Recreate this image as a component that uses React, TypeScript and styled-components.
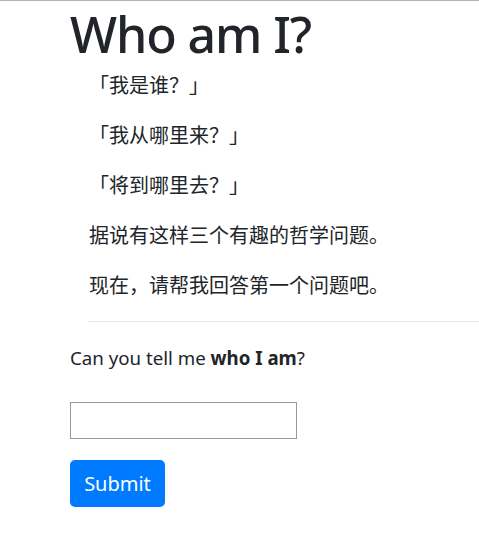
import React from "react";
import styled, { createGlobalStyle } from "styled-components";

const GlobalStyle = createGlobalStyle`
  html, body {
    margin: 0;
    padding: 0;
    background: #fff;
  }
  body {
    border-top: 1px solid #b3b3b3;
    color: #212529;
    font-family: "Noto Sans", "Noto Sans CJK SC", sans-serif;
  }
`;

const Page = styled.main`
  padding: 0 0 0 70px;
`;

const Title = styled.h1`
  margin: 0;
  font-size: 50px;
  font-weight: 500;
  line-height: 66px;
  letter-spacing: -1.1px;
`;

const Quote = styled.blockquote`
  margin: 1px 0 0 19px;
`;

const Line = styled.p`
  margin: 0;
  height: 50px;
  font-family: "Noto Sans CJK SC", sans-serif;
  font-size: 20px;
  line-height: 34px;
`;

const Rule = styled.hr`
  margin: 3px 0 0 -1px;
  border: 0;
  border-top: 1px solid #e6e6e6;
  height: 0;
`;

const Question = styled.p`
  margin: 22px 0 0;
  font-size: 18.7px;
  line-height: 28px;

  strong {
    font-weight: 700;
  }
`;

const Form = styled.form`
  display: flex;
  flex-direction: column;
  align-items: flex-start;
  gap: 21px;
  margin-top: 30px;
`;

const Field = styled.input`
  box-sizing: border-box;
  width: 227px;
  height: 37px;
  margin: 0;
  border: 1px solid #999;
  border-radius: 0;
  padding: 0 6px;
  font-size: 16px;
  outline: none;
`;

const Button = styled.button`
  box-sizing: border-box;
  width: 95px;
  height: 47px;
  border: 0;
  border-radius: 5px;
  background: #007bff;
  color: #fff;
  font-family: "Noto Sans", sans-serif;
  font-size: 20px;
  cursor: pointer;
`;

export default function App() {
  const lines = ["「我是谁？」", "「我从哪里来？」", "「将到哪里去？」", "据说有这样三个有趣的哲学问题。", "现在，请帮我回答第一个问题吧。"];

  return (
    <>
      <GlobalStyle />
      <Page>
        <Title>Who am I?</Title>
        <Quote>
          {lines.map((line, i) => (
            <Line key={i}>{line}</Line>
          ))}
          <Rule />
        </Quote>
        <Question>
          Can you tell me <strong>who I am</strong>?
        </Question>
        <Form onSubmit={(e) => e.preventDefault()}>
          <Field type="text" />
          <Button type="submit">Submit</Button>
        </Form>
      </Page>
    </>
  );
}
